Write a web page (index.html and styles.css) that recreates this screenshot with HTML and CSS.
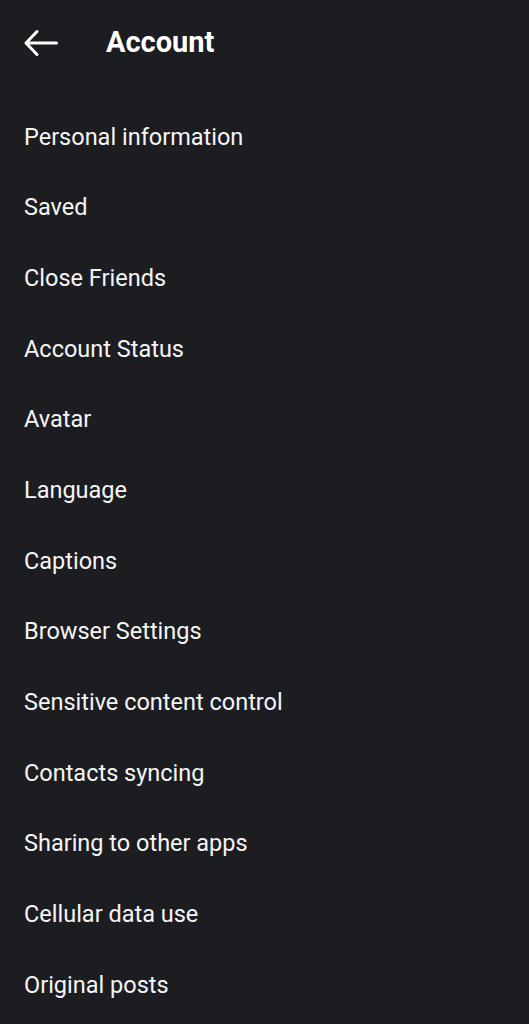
FILE: index.html
```html
<!DOCTYPE html>
<html lang="en">
<head>
    <meta charset="UTF-8">
    <meta name="viewport" content="width=device-width, initial-scale=1.0">
    <link rel="stylesheet" href="styles.css">
    <title>Account</title>
</head>
<body>

<div class="header">
    <svg class="backIcon" width="36" height="28" viewBox="0 0 36 28">
        <path d="M33.5 14 H3 M14 2.5 L3 14 L14 25.5" fill="none" stroke="#fff" stroke-width="3" stroke-linecap="round" stroke-linejoin="round"/>
    </svg>
    <h1>Account</h1>
</div>

<ul class="menu">
    <li>Personal information</li>
    <li>Saved</li>
    <li>Close Friends</li>
    <li>Account Status</li>
    <li>Avatar</li>
    <li>Language</li>
    <li>Captions</li>
    <li>Browser Settings</li>
    <li>Sensitive content control</li>
    <li>Contacts syncing</li>
    <li>Sharing to other apps</li>
    <li>Cellular data use</li>
    <li>Original posts</li>
</ul>

</body>
</html>
```

FILE: styles.css
```css
html, body {
    margin: 0;
    background-color: #1c1d21;
}

body {
    font-family: Roboto, 'Noto Sans', sans-serif;
    color: #f5f5f5;
    overflow: hidden;
}

.header {
    display: flex;
    align-items: center;
    height: 84px;
    padding-left: 23px;
}

.backIcon {
    display: block;
    flex: none;
    margin-top: 1px;
}

h1 {
    margin: 0 0 0 47px;
    font-size: 29px;
    font-weight: 700;
    color: #fff;
}

.menu {
    list-style: none;
    margin: 0;
    padding: 17.67px 0 0 24px;
}

.menu li {
    height: 70.67px;
    line-height: 70.67px;
    font-size: 23.5px;
}
```
